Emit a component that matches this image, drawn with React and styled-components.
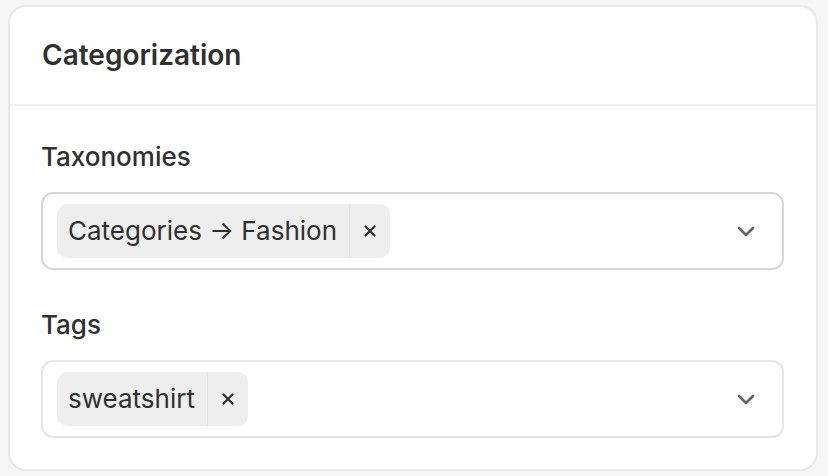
import React from 'react';
import styled, { createGlobalStyle } from 'styled-components';

const GlobalStyle = createGlobalStyle`
  html, body {
    margin: 0;
    padding: 0;
    background: #f6f6f6;
    font-family: Inter, 'Noto Sans', sans-serif;
    color: #303030;
  }
`;

const Page = styled.div`
  width: 828px;
  height: 476px;
  padding: 5px 10px 5px 8px;
  box-sizing: border-box;
`;

const Card = styled.section`
  background: #fff;
  border: 2px solid #e8e8e8;
  border-radius: 18px;
  height: 100%;
  box-sizing: border-box;
  display: flex;
  flex-direction: column;
  overflow: hidden;
`;

const CardHeader = styled.header`
  flex-shrink: 0;
  height: 99px;
  box-sizing: border-box;
  display: flex;
  align-items: center;
  padding: 0 32px 2px;
  border-bottom: 2px solid #efefef;
`;

const Title = styled.h2`
  margin: 0;
  font-size: 28px;
  font-weight: 600;
  color: #303030;
`;

const CardBody = styled.div`
  padding: 35px 32px 0 31px;
  display: flex;
  flex-direction: column;
  gap: 39px;
`;

const Field = styled.div`
  display: flex;
  flex-direction: column;
`;

const Label = styled.label`
  font-size: 26px;
  font-weight: 500;
  color: #303030;
  line-height: 32px;
  margin-bottom: 19px;
`;

const SelectBox = styled.div`
  height: 78px;
  box-sizing: border-box;
  border: 2px solid ${(p) => (p.active ? '#d6d6d6' : '#e6e6e6')};
  border-radius: 12px;
  display: flex;
  align-items: center;
  padding: 0 24px 0 14px;
`;

const Chips = styled.div`
  flex: 1;
  display: flex;
  gap: 8px;
`;

const Chip = styled.div`
  display: flex;
  align-items: center;
  height: 54px;
  background: #eeeeee;
  border-radius: 10px;
  font-size: 26px;
  color: #303030;
`;

const ChipLabel = styled.span`
  padding: 0 12px 0 11px;
  line-height: 54px;
`;

const ChipRemove = styled.button`
  height: 100%;
  width: 41px;
  border: none;
  border-left: 1px solid #e2e2e2;
  background: transparent;
  display: flex;
  align-items: center;
  justify-content: center;
  padding: 0;
  color: #303030;
  cursor: pointer;
`;

const Chevron = styled.svg`
  width: 24px;
  height: 24px;
  color: #5f6270;
`;

const XIcon = () => (
  <svg width="14" height="14" viewBox="0 0 14 14" fill="none">
    <path d="M2.5 2.5l9 9M11.5 2.5l-9 9" stroke="currentColor" strokeWidth="2.2" strokeLinecap="round" />
  </svg>
);

const MultiSelect = ({ values, active }) => (
  <SelectBox active={active}>
    <Chips>
      {values.map((v) => (
        <Chip key={v}>
          <ChipLabel>{v}</ChipLabel>
          <ChipRemove aria-label="Remove">
            <XIcon />
          </ChipRemove>
        </Chip>
      ))}
    </Chips>
    <Chevron viewBox="0 0 24 24" fill="none">
      <path d="M5 9l7 7 7-7" stroke="currentColor" strokeWidth="2.6" strokeLinecap="round" strokeLinejoin="round" />
    </Chevron>
  </SelectBox>
);

export default function App() {
  return (
    <>
      <GlobalStyle />
      <Page>
        <Card>
          <CardHeader>
            <Title>Categorization</Title>
          </CardHeader>
          <CardBody>
            <Field>
              <Label>Taxonomies</Label>
              <MultiSelect values={['Categories → Fashion']} active />
            </Field>
            <Field>
              <Label>Tags</Label>
              <MultiSelect values={['sweatshirt']} />
            </Field>
          </CardBody>
        </Card>
      </Page>
    </>
  );
}
